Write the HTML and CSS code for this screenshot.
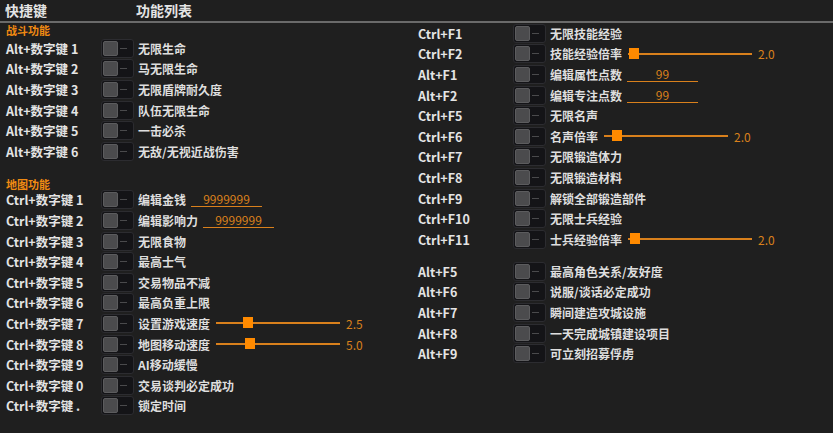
FILE: index.html
```html
<!DOCTYPE html>
<html lang="zh-CN">
<head>
    <meta charset="UTF-8">
    <title>功能列表</title>
    <link rel="stylesheet" href="styles.css">
</head>
<body>
    <header class="table-head">
        <span class="col-key">快捷键</span>
        <span class="col-func">功能列表</span>
    </header>

    <main class="columns">
        <section class="column left">
            <div class="group-title">战斗功能</div>
            <div class="row"><span class="key">Alt+数字键 1</span><span class="toggle"><i></i></span><span class="label">无限生命</span></div>
            <div class="row"><span class="key">Alt+数字键 2</span><span class="toggle"><i></i></span><span class="label">马无限生命</span></div>
            <div class="row"><span class="key">Alt+数字键 3</span><span class="toggle"><i></i></span><span class="label">无限盾牌耐久度</span></div>
            <div class="row"><span class="key">Alt+数字键 4</span><span class="toggle"><i></i></span><span class="label">队伍无限生命</span></div>
            <div class="row"><span class="key">Alt+数字键 5</span><span class="toggle"><i></i></span><span class="label">一击必杀</span></div>
            <div class="row"><span class="key">Alt+数字键 6</span><span class="toggle"><i></i></span><span class="label">无敌/无视近战伤害</span></div>

            <div class="group-title second">地图功能</div>
            <div class="row"><span class="key">Ctrl+数字键 1</span><span class="toggle"><i></i></span><span class="label">编辑金钱</span><span class="field">9999999</span></div>
            <div class="row"><span class="key">Ctrl+数字键 2</span><span class="toggle"><i></i></span><span class="label">编辑影响力</span><span class="field">9999999</span></div>
            <div class="row"><span class="key">Ctrl+数字键 3</span><span class="toggle"><i></i></span><span class="label">无限食物</span></div>
            <div class="row"><span class="key">Ctrl+数字键 4</span><span class="toggle"><i></i></span><span class="label">最高士气</span></div>
            <div class="row"><span class="key">Ctrl+数字键 5</span><span class="toggle"><i></i></span><span class="label">交易物品不减</span></div>
            <div class="row"><span class="key">Ctrl+数字键 6</span><span class="toggle"><i></i></span><span class="label">最高负重上限</span></div>
            <div class="row"><span class="key">Ctrl+数字键 7</span><span class="toggle"><i></i></span><span class="label">设置游戏速度</span><span class="slider"><b style="left: 27px"></b></span><span class="value">2.5</span></div>
            <div class="row"><span class="key">Ctrl+数字键 8</span><span class="toggle"><i></i></span><span class="label">地图移动速度</span><span class="slider"><b style="left: 29px"></b></span><span class="value">5.0</span></div>
            <div class="row"><span class="key">Ctrl+数字键 9</span><span class="toggle"><i></i></span><span class="label">AI移动缓慢</span></div>
            <div class="row"><span class="key">Ctrl+数字键 0</span><span class="toggle"><i></i></span><span class="label">交易谈判必定成功</span></div>
            <div class="row"><span class="key">Ctrl+数字键 .</span><span class="toggle"><i></i></span><span class="label">锁定时间</span></div>
        </section>

        <section class="column right">
            <div class="row"><span class="key">Ctrl+F1</span><span class="toggle"><i></i></span><span class="label">无限技能经验</span></div>
            <div class="row"><span class="key">Ctrl+F2</span><span class="toggle"><i></i></span><span class="label">技能经验倍率</span><span class="slider"><b style="left: 1px"></b></span><span class="value">2.0</span></div>
            <div class="row"><span class="key">Alt+F1</span><span class="toggle"><i></i></span><span class="label">编辑属性点数</span><span class="field">99</span></div>
            <div class="row"><span class="key">Alt+F2</span><span class="toggle"><i></i></span><span class="label">编辑专注点数</span><span class="field">99</span></div>
            <div class="row"><span class="key">Ctrl+F5</span><span class="toggle"><i></i></span><span class="label">无限名声</span></div>
            <div class="row"><span class="key">Ctrl+F6</span><span class="toggle"><i></i></span><span class="label">名声倍率</span><span class="slider"><b style="left: 8px"></b></span><span class="value">2.0</span></div>
            <div class="row"><span class="key">Ctrl+F7</span><span class="toggle"><i></i></span><span class="label">无限锻造体力</span></div>
            <div class="row"><span class="key">Ctrl+F8</span><span class="toggle"><i></i></span><span class="label">无限锻造材料</span></div>
            <div class="row"><span class="key">Ctrl+F9</span><span class="toggle"><i></i></span><span class="label">解锁全部锻造部件</span></div>
            <div class="row"><span class="key">Ctrl+F10</span><span class="toggle"><i></i></span><span class="label">无限士兵经验</span></div>
            <div class="row"><span class="key">Ctrl+F11</span><span class="toggle"><i></i></span><span class="label">士兵经验倍率</span><span class="slider"><b style="left: 2px"></b></span><span class="value">2.0</span></div>

            <div class="spacer"></div>
            <div class="row"><span class="key">Alt+F5</span><span class="toggle"><i></i></span><span class="label">最高角色关系/友好度</span></div>
            <div class="row"><span class="key">Alt+F6</span><span class="toggle"><i></i></span><span class="label">说服/谈话必定成功</span></div>
            <div class="row"><span class="key">Alt+F7</span><span class="toggle"><i></i></span><span class="label">瞬间建造攻城设施</span></div>
            <div class="row"><span class="key">Alt+F8</span><span class="toggle"><i></i></span><span class="label">一天完成城镇建设项目</span></div>
            <div class="row"><span class="key">Alt+F9</span><span class="toggle"><i></i></span><span class="label">可立刻招募俘虏</span></div>
        </section>
    </main>
</body>
</html>
```

FILE: styles.css
```css
:root {
    --bg: #1f1f1f;
    --text: #e4e4e4;
    --orange: #f08a12;
    --orange-dim: #d9801c;
    --line: #6a6a6a;
}

* {
    margin: 0;
    padding: 0;
    box-sizing: border-box;
}

body {
    width: 833px;
    height: 433px;
    overflow: hidden;
    background-color: var(--bg);
    color: var(--text);
    font-family: "Noto Sans CJK SC", "Noto Sans", sans-serif;
    font-size: 12px;
}

.table-head {
    height: 23px;
    border-bottom: 2px solid var(--line);
    display: flex;
    align-items: center;
    font-size: 14px;
    font-weight: 700;
    line-height: 1;
    padding-left: 5px;
    padding-bottom: 2px;
}

.col-key {
    width: 131px;
}

.columns {
    display: grid;
    grid-template-columns: 411px 1fr;
}

.column.left {
    padding-left: 6px;
}

.column.right {
    padding-left: 7px;
}

.group-title {
    height: 15px;
    line-height: 15px;
    color: var(--orange);
    font-size: 11px;
    font-weight: 700;
}

.group-title.second {
    margin-top: 16px;
    height: 12px;
    line-height: 12px;
}

.spacer {
    height: 11.4px;
}

.row {
    height: 20.6px;
    display: flex;
    align-items: center;
    white-space: nowrap;
}

.key {
    width: 95px;
    font-weight: 700;
    font-size: 12.5px;
}

.toggle {
    width: 33px;
    height: 19px;
    border: 1px solid #2c2c30;
    border-radius: 3px;
    background-color: #141417;
    display: flex;
    align-items: center;
    padding-left: 1px;
    margin-right: 4px;
}

.toggle i {
    width: 15px;
    height: 15px;
    border-radius: 2px;
    background-color: #4b4b4d;
    border: 1px solid #5c5c5e;
}

.toggle::after {
    content: "";
    width: 7px;
    height: 1px;
    margin-left: 2px;
    background-color: #4a4a4c;
}

.label {
    font-weight: 700;
    color: #dedede;
}

.field {
    width: 71px;
    margin-left: 5px;
    border-bottom: 1px solid var(--orange-dim);
    color: var(--orange-dim);
    text-align: center;
    line-height: 14px;
}

.slider {
    position: relative;
    width: 124px;
    height: 2px;
    margin-left: 6px;
    background-color: var(--orange-dim);
}

.slider b {
    position: absolute;
    top: -5px;
    width: 10px;
    height: 11px;
    background-color: #ff8a00;
}

.value {
    margin-left: 6px;
    color: var(--orange-dim);
}
```
